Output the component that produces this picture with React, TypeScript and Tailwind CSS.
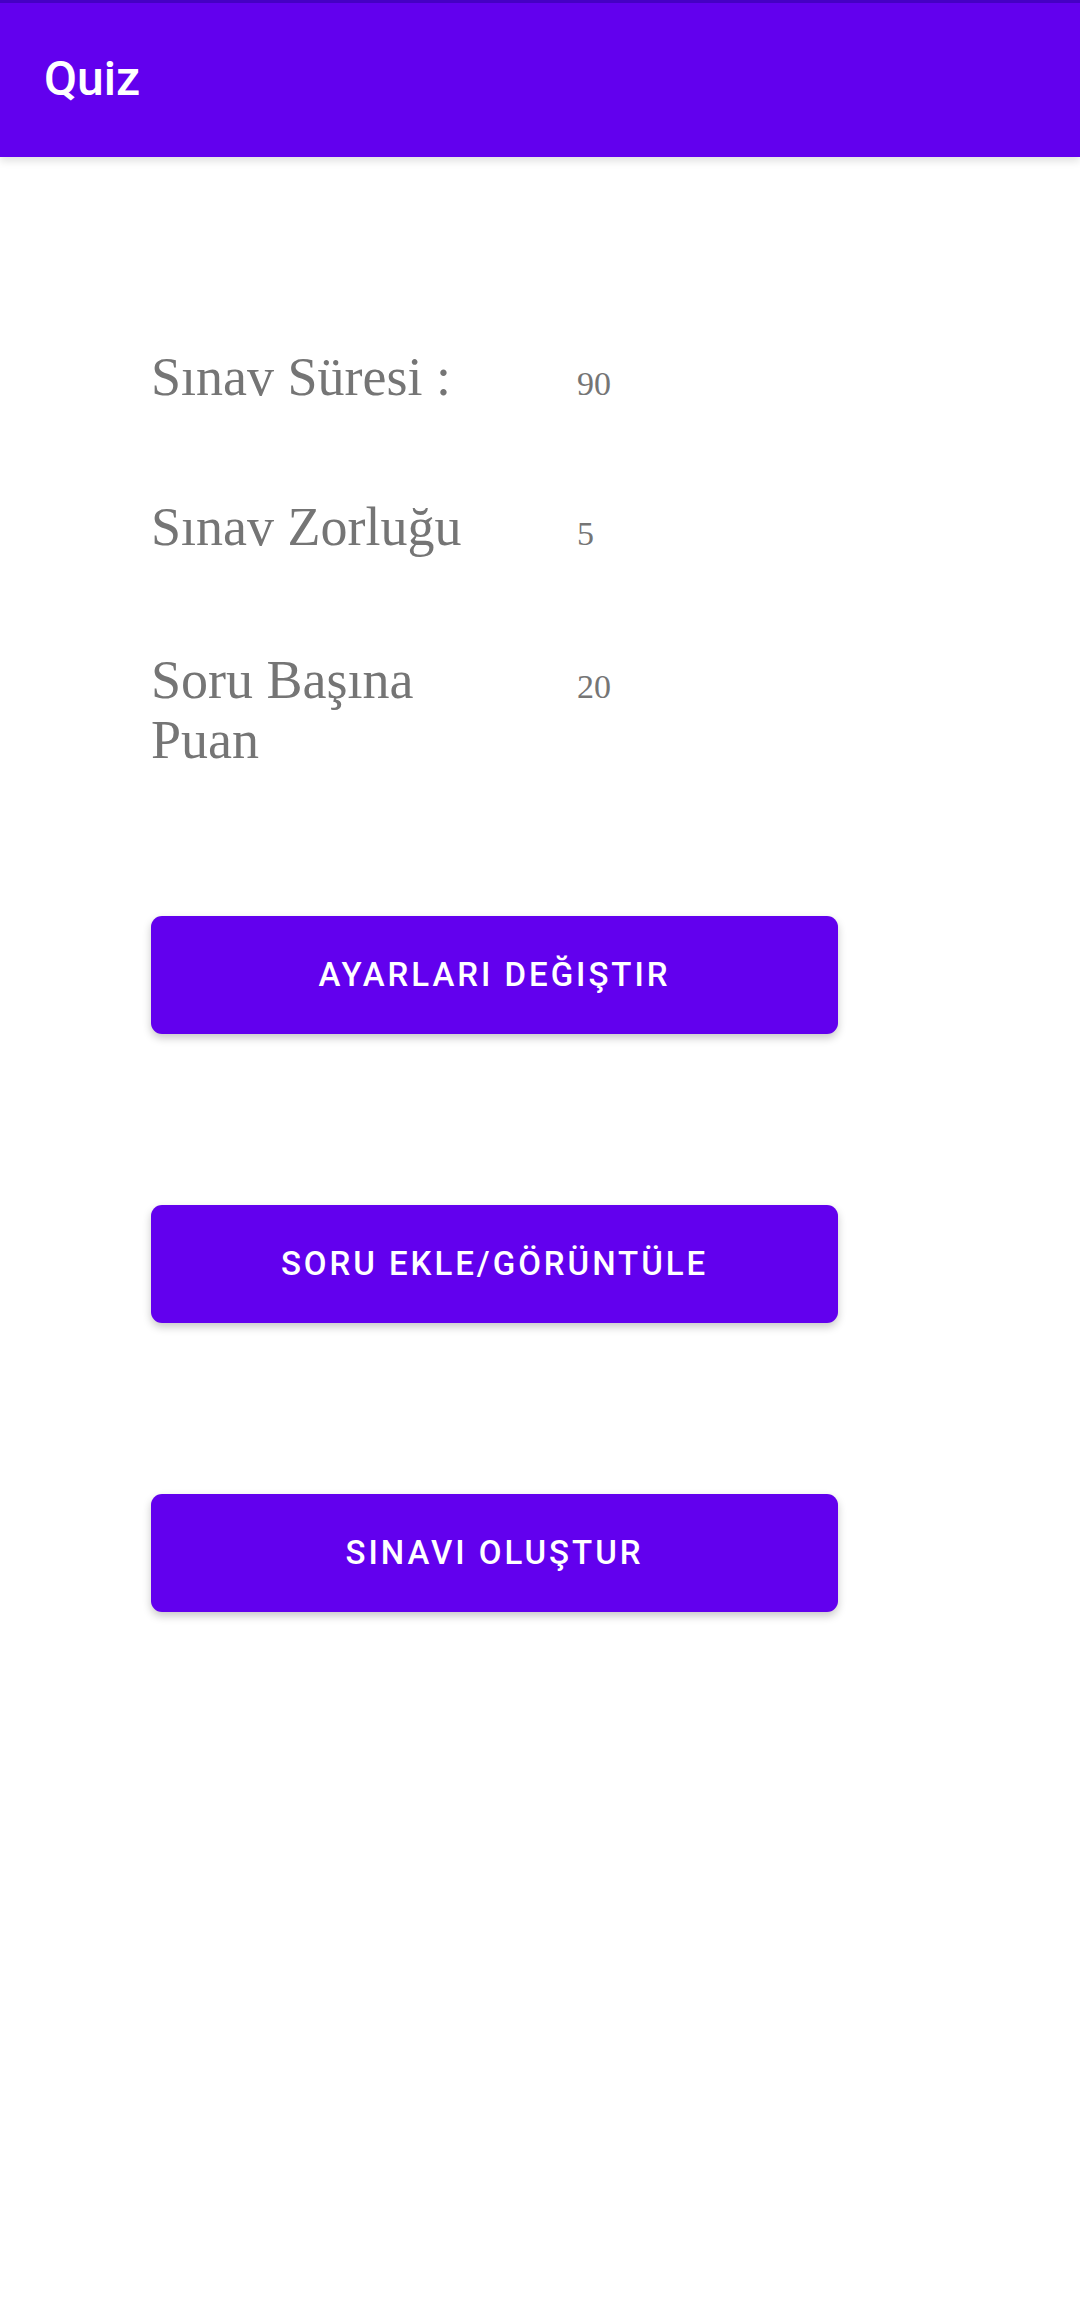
import React from 'react';

const settings = [
  { label: 'Sınav Süresi :', value: '90', gap: 'mt-0' },
  { label: 'Sınav Zorluğu', value: '5', gap: 'mt-[88px]' },
  { label: 'Soru Başına Puan', value: '20', gap: 'mt-[91px]' },
];

const buttons = ['AYARLARI DEĞIŞTIR', 'SORU EKLE/GÖRÜNTÜLE', 'SINAVI OLUŞTUR'];

const App: React.FC = () => {
  return (
    <div className="min-h-[2301px] bg-white">
      <header className="relative z-10 bg-[#6200ee] shadow-[0_4px_8px_rgba(0,0,0,0.12)]">
        <div className="h-[3px] bg-[#4500c4]" />
        <div className="h-[154px] flex items-center px-[44px]">
          <h1 className="text-white text-[48px] font-medium font-['Roboto',sans-serif] leading-none -mt-[2px]">
            Quiz
          </h1>
        </div>
      </header>

      <main className="pl-[151px] pt-[190px]">
        {settings.map((s) => (
          <div key={s.label} className={`flex items-baseline ${s.gap}`}>
            <div className="w-[360px] text-[54px] leading-[60px] text-[#757575] font-['Liberation_Serif',serif]">
              {s.label}
            </div>
            <div className="ml-[66px] text-[34px] text-[#757575] font-['Liberation_Serif',serif]">
              {s.value}
            </div>
          </div>
        ))}

        <div className="mt-[146px] flex flex-col gap-[171px]">
          {buttons.map((b) => (
            <button
              key={b}
              className="w-[687px] h-[118px] rounded-[11px] bg-[#6200ee] text-white text-[33px] font-medium tracking-[0.09em] font-['Roboto',sans-serif] shadow-[0_4px_8px_rgba(0,0,0,0.22)]"
            >
              {b}
            </button>
          ))}
        </div>
      </main>
    </div>
  );
};

export default App;
